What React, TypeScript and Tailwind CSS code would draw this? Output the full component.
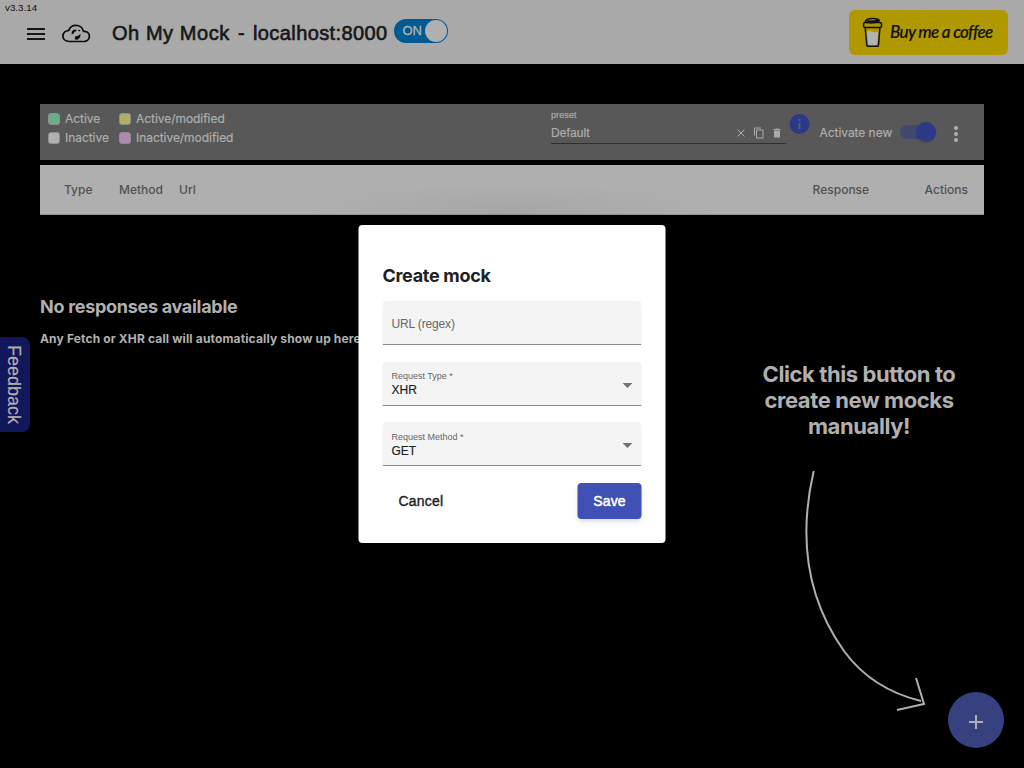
import React from "react";

const helv = "font-['Liberation_Sans',Arial,sans-serif]";
const inter = "font-[Inter,Roboto,sans-serif]";

function CloudLogo() {
  return (
    <svg className="ml-4 h-5 w-[29px] shrink-0" viewBox="0 0 28 20" preserveAspectRatio="none" fill="none">
      <path
        d="M7 17.500h14.300a5.100 5.100 0 0 0 1-10.100h-1.500C20 3.700 16.900 1.300 13.400 1.300c-3.300 0-5.900 2-6.800 5C3.300 6.600.9 9 .9 12c0 3.200 2.600 5.500 6.100 5.500Z"
        stroke="#0d0d0d"
        strokeWidth="1.700"
      />
      <path d="m9.200 10.300.3-2.700 1.700-1.900 2.300-.3.600 1.600-2 .8-1 2Z" fill="#0d0d0d" />
      <path d="m12.800 12.300 2.300-.2 2.900-2.100-.5 3.200-2 2.300-2.500.2-.7-1.300Z" fill="#0d0d0d" />
      <path d="m15.700 5.900 1.700 1.200" stroke="#0d0d0d" strokeWidth="1.200" />
    </svg>
  );
}

function CoffeeButton() {
  return (
    <div className="ml-auto flex h-[45px] w-[159.500px] items-center rounded-md bg-[#b09800] pl-[13.500px]">
      <svg className="h-[31px] w-[21px] shrink-0" viewBox="0 0 21 31" fill="none" stroke="#111" strokeWidth="1.500" strokeLinejoin="round">
        <path d="m4.800 14.500 1 10.500 1 3.200h7.400l1.200-3.200 1-10.500c-2.500 1.500-4 .9-6 .2-2-.7-4-.8-5.600-.2Z" fill="#b3b3b3" stroke="none" />
        <path d="m3.200 10.500 1.600 17.800c0 .7.500 1 1.200 1h9.300c.7 0 1.100-.4 1.200-1l1.400-17.800" />
        <path d="M1.600 6.800c0-.9.8-1.300 2-1.300h14c1.200 0 1.900.5 1.900 1.300v2.400c0 .8-.7 1.200-1.900 1.200H3.300c-1.100 0-1.700-.4-1.700-1.100Z" />
        <path d="M3.200 5.400c0-2.700 3.400-3.800 7.400-3.800s6.500 1 6.700 2.200c-2 1.800-9 2-13.700 1.400M5 3.700c3 .7 7 .6 11-.4" />
      </svg>
      <span className="ml-[7px] whitespace-nowrap font-[Lato,sans-serif] text-[17px] font-medium italic tracking-[-0.650px] text-[#111] [-webkit-text-stroke:0.200px_#111]">
        Buy me a coffee
      </span>
    </div>
  );
}

function Header() {
  return (
    <header className="relative flex h-16 items-center bg-[#a9a9a9] pl-[27px] pr-4">
      <span className={`${helv} absolute left-[5px] top-[2px] text-[9.800px] leading-3 text-[#111]`}>v3.3.14</span>
      <div className="mt-[3px] flex w-[18px] shrink-0 flex-col gap-[3px]">
        <i className="h-0.5 bg-[#161616]" />
        <i className="h-0.5 bg-[#161616]" />
        <i className="h-0.5 bg-[#161616]" />
      </div>
      <div className="flex items-center pl-[1px] pt-[3px]">
        <CloudLogo />
      </div>
      <h1 className={`${helv} ml-[21px] mt-0.5 flex whitespace-nowrap text-[20px] font-normal leading-6 tracking-[0.400px] text-[#171717] [-webkit-text-stroke:0.600px_#171717]`}>
        <span className="w-[126px] tracking-[0.550px]">Oh My Mock</span>
        <span className="w-[15px]">-</span>
        <span className="w-[134px]">localhost:8000</span>
      </h1>
      <div className="ml-[6.500px] flex h-6 w-[54px] -translate-y-px items-center justify-between rounded-full bg-[#005b93] pl-[9px] pr-px">
        <span className={`${helv} text-[13px] text-[#b3b3b3] [-webkit-text-stroke:0.300px_#b3b3b3]`}>ON</span>
        <span className="size-[22px] rounded-full bg-[#b0b0b0]" />
      </div>
      <CoffeeButton />
    </header>
  );
}

function LegendItem({ color, label }: { color: string; label: string }) {
  return (
    <div className="flex h-[19px] items-center gap-[5px]">
      <span className={`size-3 rounded-[3px] border border-[#8f8f8f] ${color}`} />
      <span>{label}</span>
    </div>
  );
}

function Toolbar() {
  return (
    <div className={`${inter} flex h-14 bg-[#585858] text-[12px] text-[#adadad] [-webkit-text-stroke:0.200px_#adadad]`}>
      <div className="grid w-[511px] grid-cols-[71px_1fr] content-start pl-2 pt-[5.500px] tracking-[-0.050px]">
        <LegendItem color="bg-[#6aad8a]" label="Active" />
        <LegendItem color="bg-[#b0ad66]" label="Active/modified" />
        <LegendItem color="bg-[#b0b0b0]" label="Inactive" />
        <LegendItem color="bg-[#b088b0]" label="Inactive/modified" />
      </div>
      <div className={`${helv} h-10 w-[235px] border-b border-[#2f2f2f] pt-[5px]`}>
        <div className="text-[9px] leading-3 tracking-[0.100px]">preset</div>
        <div className="flex h-6 items-center">
          <span className="flex-1 text-[12px] tracking-[0.100px]">Default</span>
          <svg className="size-2" viewBox="0 0 8 8" stroke="#aaa" strokeWidth="1"><path d="m.5.5 7 7m0-7-7 7" /></svg>
          <svg className="ml-2 size-3" viewBox="0 0 24 24" fill="#aaa"><path d="M16 1H4C2.900 1 2 1.900 2 3v14h2V3h12V1zm3 4H8c-1.100 0-2 .9-2 2v14c0 1.100.9 2 2 2h11c1.100 0 2-.9 2-2V7c0-1.100-.9-2-2-2zm0 16H8V7h11v14z" /></svg>
          <svg className="ml-[6px] mr-[3.500px] size-3" viewBox="0 0 24 24" fill="#aaa"><path d="M6 19c0 1.100.9 2 2 2h8c1.100 0 2-.9 2-2V7H6v12zM19 4h-3.500l-1-1h-5l-1 1H5v2h14V4z" /></svg>
        </div>
      </div>
      <svg className="ml-[3px] mt-[10px] size-5 overflow-visible" viewBox="0 0 20 20">
        <circle cx="10.500" cy="10" r="10" fill="#2d3886" />
        <path d="M9.500 5h2v2h-2zM9.500 9h2v6h-2z" fill="#565d73" />
      </svg>
      <span className="ml-[10.500px] w-[80.500px] whitespace-nowrap pt-[20px] leading-[18px] tracking-[-0.050px]">Activate new</span>
      <div className="mt-[21px] flex h-[14px] w-[36px] items-center justify-end rounded-full bg-[#414970]">
        <span className="size-5 shrink-0 rounded-full bg-[#2d3886] shadow" />
      </div>
      <div className="ml-[18px] mt-[21.500px] flex flex-col gap-[2px]">
        <i className="size-1 rounded-full bg-[#b0b0b0]" />
        <i className="size-1 rounded-full bg-[#b0b0b0]" />
        <i className="size-1 rounded-full bg-[#b0b0b0]" />
      </div>
    </div>
  );
}

function Field({ label, value }: { label: string; value?: string }) {
  return (
    <div className={`${helv} flex h-11 items-center justify-between rounded-t border-b border-[#8b8b8b] bg-[#f4f4f4] px-[9px]`}>
      {value ? (
        <>
          <div className="pt-[3px]">
            <div className="text-[9px] leading-3 text-[#666]">{label}</div>
            <div className="text-[12px] leading-[17px] text-[#202020] [-webkit-text-stroke:0.150px_#202020]">{value}</div>
          </div>
          <svg className="mt-1 h-[5px] w-[10px]" viewBox="0 0 10 5"><path d="M0 0h10L5 5Z" fill="#737373" /></svg>
        </>
      ) : (
        <span className="pt-0.5 text-[12px] tracking-[-0.150px] text-[#666]">{label}</span>
      )}
    </div>
  );
}

function CreateMockDialog() {
  return (
    <div className="fixed inset-0 flex items-center justify-center">
      <div role="dialog" className="mr-px h-[318px] w-[307px] translate-x-[0.500px] rounded bg-white px-6 pt-[37px]">
        <h2 className={`${inter} text-[18px] font-bold leading-7 tracking-[-0.300px] text-[#212121]`}>Create mock</h2>
        <form className="mt-[11px] flex flex-col gap-[16.500px]">
          <Field label="URL (regex)" />
          <Field label="Request Type *" value="XHR" />
          <Field label="Request Method *" value="GET" />
          <div className={`${helv} flex items-center justify-between text-[14px] tracking-[0.200px]`}>
            <button type="button" className="pl-4 pt-0.5 text-[#1f1f1f] [-webkit-text-stroke:0.400px_#1f1f1f]">Cancel</button>
            <button type="button" className="h-9 w-16 rounded bg-[#3f51b5] pt-0.5 text-white shadow-md [-webkit-text-stroke:0.500px_#fff]">Save</button>
          </div>
        </form>
      </div>
    </div>
  );
}

export default function App() {
  return (
    <div className="relative h-screen w-screen overflow-hidden bg-black text-[#b0b0b0]">
      <Header />
      <main className="px-10 pt-10">
        <Toolbar />
        <div className={`${inter} mt-[5px] flex h-[50px] items-center border-b border-[#919191] bg-[#afafaf] bg-[radial-gradient(ellipse_200px_34px_at_472px_50px,#a6a6a6,#afafaf)] pl-6 pr-4 text-[12px] font-medium text-[#515151]`}>
          <span className="w-[55px]">Type</span>
          <span className="w-[60px]">Method</span>
          <span className="flex-1">Url</span>
          <span className="w-28">Response</span>
          <span>Actions</span>
        </div>
        <section className={`${inter} pt-[78px]`}>
          <h2 className="text-[18px] font-bold leading-7 tracking-[-0.290px]">No responses available</h2>
          <p className="mt-2 whitespace-nowrap text-[12px] font-bold leading-5 tracking-[0.150px]">Any Fetch or XHR call will automatically show up here</p>
        </section>
      </main>
      <div className="absolute left-0 top-[337px] flex h-[95px] w-[29.500px] items-center justify-center rounded-r-lg bg-[#12165a] pr-0.5">
        <span className={`${helv} text-[18px] leading-5 [writing-mode:vertical-rl] [-webkit-text-stroke:0.200px_#b0b0b0]`}>Feedback</span>
      </div>
      <aside className="absolute right-5 top-[361px] flex w-[246px] flex-col items-end">
        <p className={`${inter} w-[246px] pr-[44px] text-center text-[22px] font-bold leading-[26px] tracking-[-0.400px]`}>
          Click this button to<br />create new mocks<br />manually!
        </p>
        <svg className="mr-[76px] mt-[29px] h-[248px] w-[125px]" viewBox="0 0 125 248" fill="none" stroke="#b0b0b0" strokeWidth="2">
          <path d="M10.700 3C-5 71 4 131 41 183c19 26 44 42 77 50M113 210l8 26-27 6" />
        </svg>
        <button type="button" aria-label="Add mock" className="-mt-6 flex size-14 items-center justify-center rounded-full bg-[#37417f]">
          <svg className="mt-[3px] size-[14px]" viewBox="0 0 14 14" stroke="#b0b0b0" strokeWidth="2"><path d="M7 0v14M0 7h14" /></svg>
        </button>
      </aside>
      <CreateMockDialog />
    </div>
  );
}
